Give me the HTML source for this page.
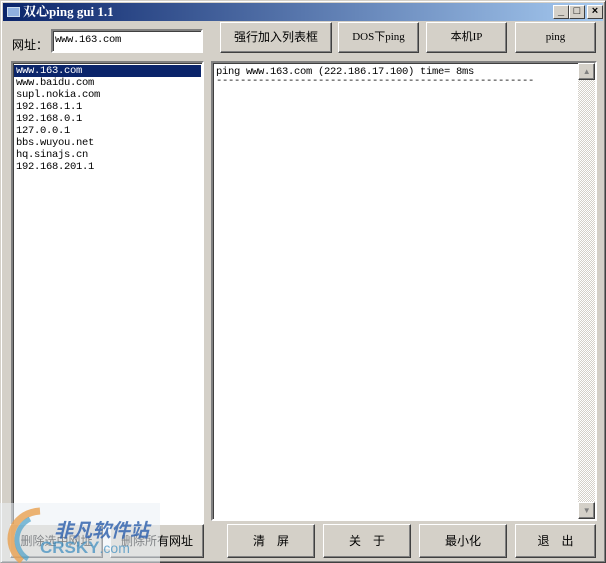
<!DOCTYPE html>
<html><head><meta charset="utf-8"><style>
*{box-sizing:border-box;margin:0;padding:0}
body{width:606px;height:563px;overflow:hidden;background:#d4d0c8;font-family:"Liberation Sans","Noto Sans CJK SC",sans-serif;position:relative}
.win{position:absolute;left:0;top:0;width:606px;height:563px;border:1px solid;border-color:#d4d0c8 #404040 #404040 #d4d0c8;box-shadow:inset 1px 1px #fff,inset -1px -1px #808080}
.title{position:absolute;left:3px;top:3px;width:600px;height:18px;background:linear-gradient(90deg,#0a246a,#a6caf0);color:#fff;font-weight:bold;font-size:13px;line-height:18px;padding-left:20px;font-family:"Liberation Serif","Noto Serif CJK SC",serif}
.ico{position:absolute;left:4px;top:4px;width:13px;height:10px;background:#8fb0e0;border:1px solid #cde}
.tb{position:absolute;top:5px;width:16px;height:14px;background:#d4d0c8;border:1px solid;border-color:#fff #404040 #404040 #fff;font-size:11px;font-weight:bold;text-align:center;line-height:11px;color:#000}
.btn{position:absolute;background:#d4d0c8;border:1px solid;border-color:#fff #404040 #404040 #fff;box-shadow:inset -1px -1px #808080;font-size:12px;text-align:center;color:#000;font-family:"Liberation Serif","Noto Sans CJK SC",serif}
.sunk{position:absolute;background:#fff;border:2px solid;border-color:#808080 #fff #fff #808080;box-shadow:inset 1px 1px #404040}
.mono{font-family:"Liberation Mono","Noto Sans CJK SC",monospace;font-size:10.5px;letter-spacing:-0.3px}
.li{height:12px;line-height:12px;padding-left:2px}
</style></head><body>
<div class="win"></div>
<div class="title"><div class="ico"></div>双心ping gui 1.1</div>
<div class="tb" style="left:553px">_</div>
<div class="tb" style="left:569px">□</div>
<div class="tb" style="left:587px">×</div>

<div style="position:absolute;left:12px;top:36px;font-size:12px">网址：</div>
<div class="sunk mono" style="left:51px;top:29px;width:152px;height:24px;padding:3px 2px">www.163.com</div>

<div class="btn" style="left:220px;top:22px;width:112px;height:31px;line-height:29px">强行加入列表框</div>
<div class="btn" style="left:338px;top:22px;width:81px;height:31px;line-height:29px;font-size:11px">DOS下ping</div>
<div class="btn" style="left:426px;top:22px;width:81px;height:31px;line-height:29px;font-size:11px">本机IP</div>
<div class="btn" style="left:515px;top:22px;width:81px;height:31px;line-height:29px;font-size:11px">ping</div>

<div class="sunk mono" style="left:11px;top:61px;width:193px;height:488px;padding:2px 1px">
<div class="li" style="background:#0a246a;color:#fff">www.163.com</div>
<div class="li">www.baidu.com</div>
<div class="li">supl.nokia.com</div>
<div class="li">192.168.1.1</div>
<div class="li">192.168.0.1</div>
<div class="li">127.0.0.1</div>
<div class="li">bbs.wuyou.net</div>
<div class="li">hq.sinajs.cn</div>
<div class="li">192.168.201.1</div>
</div>

<div class="sunk mono" style="left:211px;top:61px;width:386px;height:460px;padding:3px 1px">
<div class="li">ping www.163.com (222.186.17.100) time= 8ms</div>
<div class="li" style="margin-top:-3px">-----------------------------------------------------</div>
<div style="position:absolute;right:0;top:0;width:17px;height:456px;background:repeating-conic-gradient(#fff 0 25%,#d4d0c8 0 50%) 0 0/2px 2px">
<div class="btn" style="left:0;top:0;width:17px;height:17px;font-size:8px;line-height:15px;color:#808080">▲</div>
<div class="btn" style="left:0;bottom:0;width:17px;height:17px;font-size:8px;line-height:15px;color:#808080">▼</div>
</div>
</div>

<div class="btn" style="left:10px;top:524px;width:93px;height:34px;line-height:32px">删除选中网址</div>
<div class="btn" style="left:110px;top:524px;width:94px;height:34px;line-height:32px">删除所有网址</div>
<div class="btn" style="left:227px;top:524px;width:88px;height:34px;line-height:32px">清　屏</div>
<div class="btn" style="left:323px;top:524px;width:88px;height:34px;line-height:32px">关　于</div>
<div class="btn" style="left:419px;top:524px;width:88px;height:34px;line-height:32px">最小化</div>
<div class="btn" style="left:515px;top:524px;width:81px;height:34px;line-height:32px">退　出</div>

<div style="position:absolute;left:0;top:503px;width:160px;height:60px;background:rgba(235,240,245,0.55)"></div>
<svg style="position:absolute;left:0;top:505px" width="60" height="58"><path d="M40 6 C10 8 2 40 22 56" stroke="#e8a050" stroke-width="7" fill="none" opacity=".8"/><path d="M30 14 C14 22 12 44 28 54" stroke="#4aa0c8" stroke-width="5" fill="none" opacity=".7"/></svg>
<div style="position:absolute;left:54px;top:516px;font-size:19px;font-weight:bold;font-style:italic;color:#3566b0;opacity:.85">非凡软件站</div>
<div style="position:absolute;left:40px;top:538px;font-size:17px;font-weight:bold;color:#3a8cc0;opacity:.7">CRSKY<span style="font-weight:normal;font-size:14px">.com</span></div>
</body></html>
